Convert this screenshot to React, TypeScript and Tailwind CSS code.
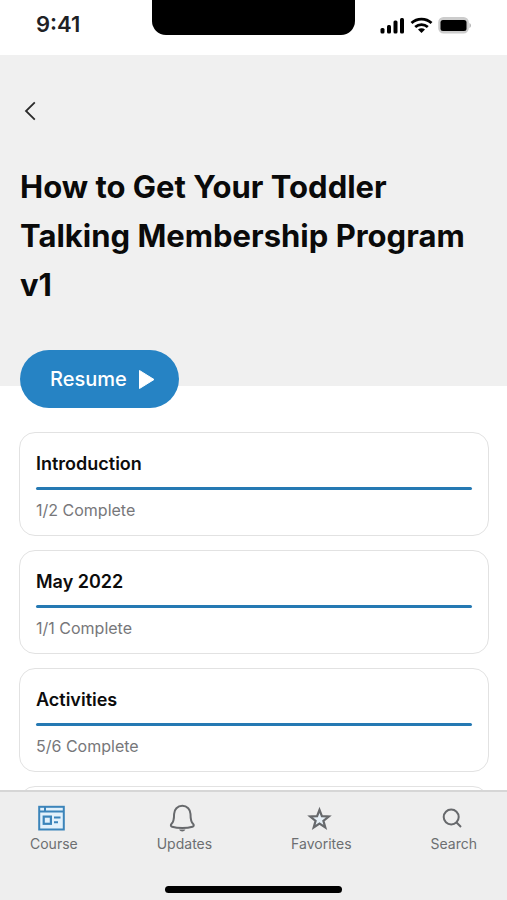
import type { ReactNode } from 'react';

interface Section {
    title: string;
    done: number;
    total: number;
}

interface Tab {
    label: string;
    icon: ReactNode;
}

const sections: Section[] = [
    { title: 'Introduction', done: 1, total: 2 },
    { title: 'May 2022', done: 1, total: 1 },
    { title: 'Activities', done: 5, total: 6 },
];

const CourseIcon = () => (
    <svg width="28" height="28" viewBox="0 0 28 28" fill="none" stroke="#3b84ba" strokeWidth="2">
        <rect x="1.2" y="2.8" width="24.6" height="22.7" fill="#e3f1fb" />
        <path d="M1.2 7.5h24.6M7 3v5" />
        <rect x="5.7" y="12.6" width="7.2" height="7.2" strokeWidth="2.2" />
        <path d="M16 13.5h6.5M16 18.3h4" />
    </svg>
);

const BellIcon = () => (
    <svg width="28" height="28" viewBox="0 0 28 28" fill="none" stroke="#67696c" strokeWidth="2" strokeLinejoin="round">
        <path d="M14.3 1.8c-4.8 0-8.2 3.6-8.2 8.2 0 5.6-.5 8-2.500 9.800-1.200 1.100-.9 2.500.5 2.900 2.900.9 6.300 1.300 10.200 1.300s7.300-.4 10.200-1.300c1.400-.4 1.700-1.800.5-2.900-2-1.800-2.500-4.200-2.500-9.800 0-4.600-3.400-8.200-8.200-8.200z" />
        <path d="M11 25.500c1.500 2.500 5 2.500 6.500 0z" fill="#67696c" stroke="none" />
    </svg>
);

const StarIcon = () => (
    <svg width="28" height="28" viewBox="0 0 28 28" fill="#e6eff6" stroke="#67696c" strokeWidth="2.2">
        <path d="M14.5 5.800l2.400 6.400 6.900.3-5.400 4.300 1.900 6.700-5.800-3.900-5.800 3.900 1.900-6.700-5.400-4.300 6.900-.3z" />
    </svg>
);

const SearchIcon = () => (
    <svg width="28" height="28" viewBox="0 0 28 28" fill="none" stroke="#67696c" strokeWidth="2">
        <circle cx="13.2" cy="13" r="7.5" />
        <path d="M18.3 18.3l4.700 4.700" />
    </svg>
);

const tabs: Tab[] = [
    { label: 'Course', icon: <CourseIcon /> },
    { label: 'Updates', icon: <BellIcon /> },
    { label: 'Favorites', icon: <StarIcon /> },
    { label: 'Search', icon: <SearchIcon /> },
];

const StatusBar = () => (
    <div className="grid h-[55px] shrink-0 grid-cols-[3fr_4fr_3fr] items-start bg-white">
        <span className="pt-2 pl-9 text-[22px] leading-8 font-semibold text-[#202124]">9:41</span>
        <div className="h-[35px] rounded-b-[14px] bg-black" />
        <div className="flex items-center justify-end gap-1 pt-4 pr-9">
            {/* Signal */}
            <svg width="26" height="18" viewBox="0 0 26 18">
                <rect x="0.5" y="12" width="4" height="5.5" rx="1.5" />
                <rect x="7" y="9" width="4" height="8.5" rx="1.5" />
                <rect x="13.5" y="4.5" width="4" height="13" rx="1.5" />
                <rect x="20" y="2" width="4" height="15.5" rx="1.5" />
            </svg>
            {/* Wifi */}
            <svg width="24" height="18" viewBox="0 0 24 18" fill="none" stroke="#000" strokeWidth="2.8">
                <path d="M1.5 7c5.5-5.2 14.5-5.2 20 0" />
                <path d="M5.2 11c3.7-3.3 8.9-3.3 12.6 0" />
                <path d="M8 13.5c2-1.700 5-1.700 7 0l-3.500 3.500z" fill="#000" stroke="none" />
            </svg>
            {/* Battery */}
            <svg width="33" height="18" viewBox="0 0 33 18">
                <rect x="1" y="1.8" width="29" height="15" rx="4.5" fill="#ccc" stroke="#ccc" strokeWidth="1.6" />
                <rect x="2.5" y="4" width="26" height="11" rx="2.5" />
                <path d="M31.5 7v5c1.800-1 1.800-4 0-5z" fill="#aaa" />
            </svg>
        </div>
    </div>
);

const SectionCard = ({ title, done, total }: Section) => (
    <li className="rounded-2xl border border-[#e2e2e2] bg-white px-4 pt-[19px] pb-[13px]">
        <h2 className="text-lg leading-6 font-semibold text-[#0c0c0c]">{title}</h2>
        <div className="mt-[11px] h-[3px] rounded-full bg-[#2579b3]" />
        <p className="mt-2 text-base leading-6 text-[#77777a]">{done}/{total} Complete</p>
    </li>
);

export default function App() {
    return (
        <div className="flex h-screen flex-col overflow-hidden bg-white font-['Inter',sans-serif]">
            <StatusBar />

            <main className="min-h-0 flex-1 overflow-hidden">
                <header className="bg-[#f0f0f0] px-5 pt-11 pb-[77px]">
                    <button aria-label="Back" className="block h-6 w-6">
                        <svg width="24" height="24" viewBox="0 0 24 24" fill="none" stroke="#2b2b2b" strokeWidth="1.8">
                            <path d="M14.8 3.3L6 12l8.800 8.700" />
                        </svg>
                    </button>
                    <h1 className="mt-[39px] text-[31px] leading-[49px] font-bold text-[#0a0a0a]">
                        How to Get Your Toddler Talking Membership Program v1
                    </h1>
                </header>

                <button className="relative -mt-9 ml-5 flex h-[58px] items-center gap-3 rounded-full bg-[#2683c4] pr-6 pl-[30px] text-xl font-medium text-white">
                    Resume
                    <svg width="16" height="20" viewBox="0 0 16 20" fill="#fff" stroke="#fff" strokeWidth="1" strokeLinejoin="round">
                        <path d="M0.5 1.5l14.500 9L0.5 19.500z" />
                    </svg>
                </button>

                <ul className="mt-6 flex flex-col gap-[14px] pr-[18px] pl-[19px]">
                    {sections.map((section) => (
                        <SectionCard key={section.title} {...section} />
                    ))}
                    {/* Next card, peeking above the tab bar */}
                    <li className="h-[104px] rounded-2xl border border-[#e2e2e2]" />
                </ul>
            </main>

            <footer className="shrink-0 border-t-2 border-[#d6d6d6] bg-[#eeeeee] pt-3 pb-[7px]">
                <nav className="flex justify-between px-[30px]">
                    {tabs.map((tab) => (
                        <button key={tab.label} className="flex flex-col items-center text-sm leading-6 text-[#6c6e71]">
                            <span className="mr-1">{tab.icon}</span>
                            {tab.label}
                        </button>
                    ))}
                </nav>
                <div className="mx-auto mt-[30px] h-[7px] w-[35%] rounded-full bg-black" />
            </footer>
        </div>
    );
}
